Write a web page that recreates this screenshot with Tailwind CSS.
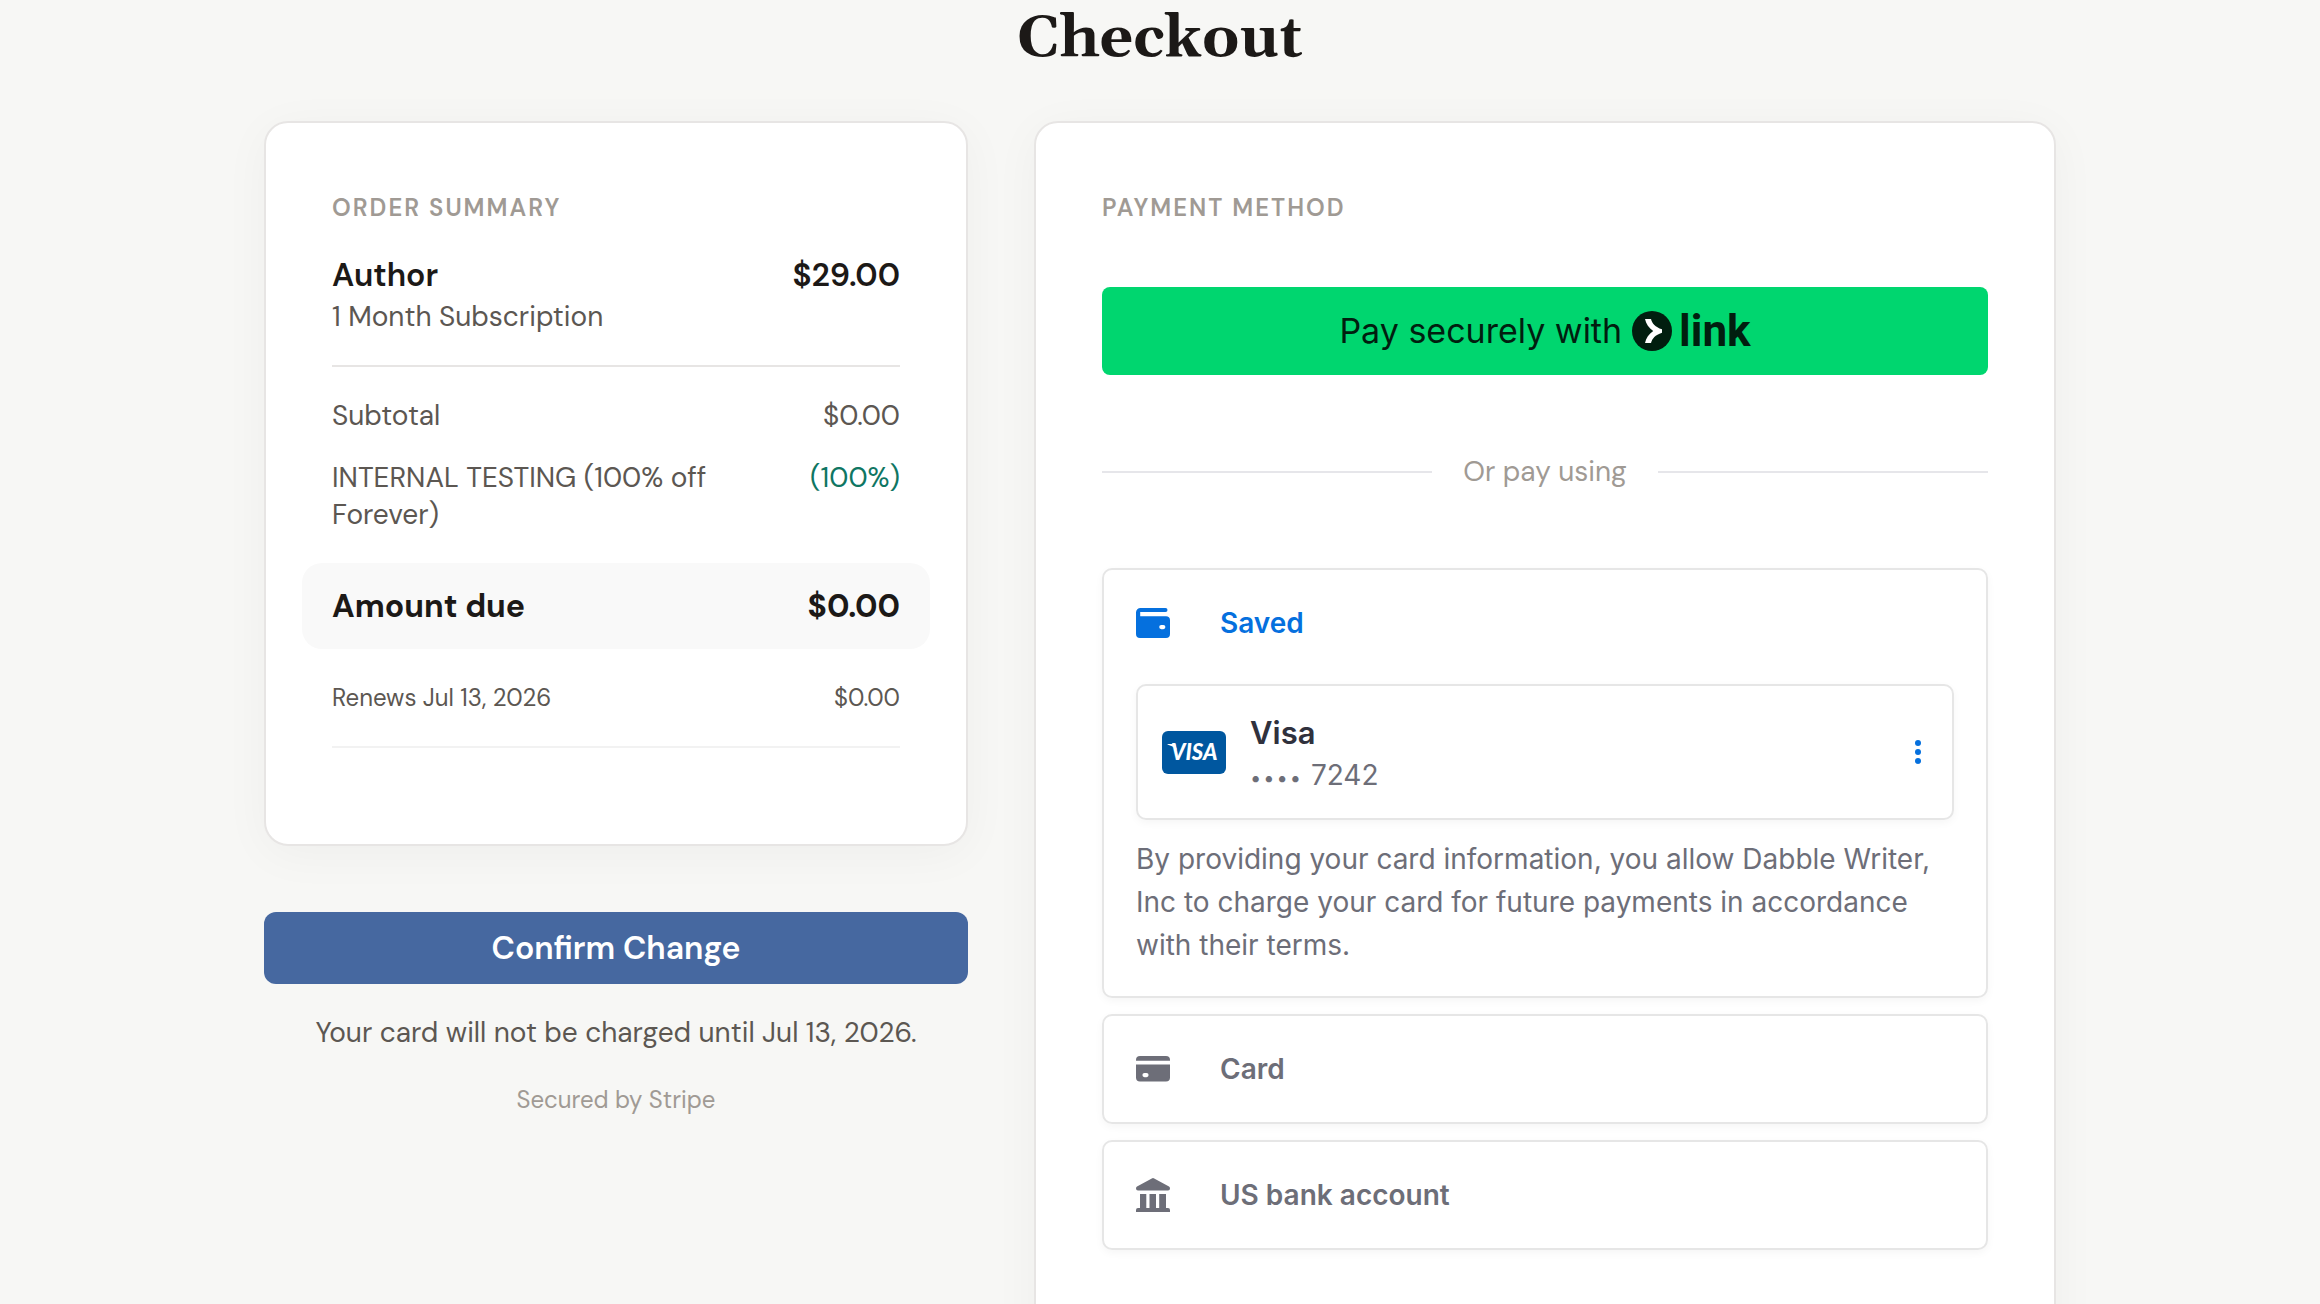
<!DOCTYPE html>
<html lang="en">
<head>
    <meta charset="UTF-8">
    <meta name="viewport" content="width=device-width, initial-scale=1.0">
    <title>Checkout</title>
    <script src="https://cdn.jsdelivr.net/npm/@tailwindcss/browser@4"></script>
</head>

<body class="bg-[#f7f7f5] min-h-screen text-stone-900 font-['DM_Sans',Lato,sans-serif]">
    <main class="max-w-[1792px] mx-auto pb-16">
        <h1 class="pb-11 text-center text-[59px] leading-[77px] font-bold font-['Gelasio','Liberation_Serif',serif]">Checkout</h1>

        <div class="grid grid-cols-[704fr_1022fr] gap-[66px] items-start">
            <!-- Order summary -->
            <div>
                <section class="bg-white border-2 border-stone-200 rounded-[24px] px-[66px] pt-[66px] pb-24 shadow-[0_8px_48px_rgba(0,0,0,0.04)]">
                    <h2 class="text-[24px] leading-[38px] font-semibold tracking-[2px] text-[#a09a94]">ORDER SUMMARY</h2>

                    <div class="flex justify-between pt-[27px] pb-7 border-b-2 border-stone-200">
                        <div>
                            <p class="text-[32px] leading-[43px] font-semibold">Author</p>
                            <p class="text-[28px] leading-[40px] text-[#5c5752]">1 Month Subscription</p>
                        </div>
                        <p class="text-[32px] leading-[43px] font-semibold">$29.00</p>
                    </div>

                    <div class="flex justify-between pt-[30px] text-[28px] leading-[37px] text-[#5c5752]">
                        <p>Subtotal</p>
                        <p>$0.00</p>
                    </div>
                    <div class="flex justify-between gap-24 pt-[25px] text-[28px] leading-[37px] text-[#5c5752]">
                        <p>INTERNAL TESTING (100% off Forever)</p>
                        <p class="text-[#0f7663]">(100%)</p>
                    </div>

                    <div class="flex justify-between mt-[30px] -mx-[30px] px-[30px] py-[22px] rounded-[20px] bg-[#f9f9f9] text-[32px] leading-[42px] font-bold">
                        <p>Amount due</p>
                        <p>$0.00</p>
                    </div>

                    <div class="flex justify-between pt-[33px] pb-8 border-b-2 border-[#f2f2f2] text-[24px] leading-8 text-[#5c5752]">
                        <p>Renews Jul 13, 2026</p>
                        <p>$0.00</p>
                    </div>
                </section>

                <button type="button" class="mt-[66px] w-full h-[72px] rounded-[12px] bg-[#4668a0] text-white text-[32px] leading-[42px] font-semibold">Confirm Change</button>
                <p class="pt-[30px] text-center text-[28px] leading-[37px] text-[#5c5752]">Your card will not be charged until Jul 13, 2026.</p>
                <p class="pt-[33px] text-center text-[24px] leading-8 text-[#a09a94]">Secured by Stripe</p>
            </div>

            <!-- Payment method -->
            <section class="bg-white border-2 border-stone-200 rounded-[24px] px-[66px] pt-[66px] pb-28 shadow-[0_8px_48px_rgba(0,0,0,0.04)]">
                <h2 class="text-[24px] leading-[38px] font-semibold tracking-[2px] text-[#a09a94]">PAYMENT METHOD</h2>

                <button type="button" class="mt-[60px] w-full h-[88px] rounded-[8px] bg-[#00d66f] text-[#011e0f] flex items-center justify-center gap-[10px]">
                    <span class="text-[34px] leading-none font-['Inter',sans-serif]">Pay securely with</span>
                    <span class="flex items-center gap-[7px]">
                        <svg class="w-10 h-10" viewBox="0 0 40 40" aria-hidden="true">
                            <circle cx="20" cy="20" r="20" fill="#011e0f"/>
                            <path d="M13 8h6c1.300 4.500 4 8 11 10.300v3.400C23 24 20.300 27.500 19 32h-6c1-5 3.900-9 8.200-12C16.900 17 14 13 13 8z" fill="#fff"/>
                        </svg>
                        <span class="text-[44px] leading-none font-bold font-['Roboto',sans-serif]">link</span>
                    </span>
                </button>

                <div class="flex items-center gap-[31px] py-[78px]">
                    <span class="flex-1 h-[2px] bg-[#e6e6ea]"></span>
                    <span class="text-[28px] leading-[37px] text-[#a09a94]">Or pay using</span>
                    <span class="flex-1 h-[2px] bg-[#e6e6ea]"></span>
                </div>

                <div class="flex flex-col gap-4 text-[28px] text-[#6d6e78] font-['Inter',sans-serif]">
                    <!-- Saved -->
                    <div class="border-2 border-[#e6e6e6] rounded-[10px] px-8 pb-[29px] shadow-[0_3px_8px_rgba(0,0,0,0.04)]">
                        <button type="button" class="w-full h-[106px] flex items-center gap-[50px] font-semibold text-[#0570de]">
                            <svg class="w-[34px] h-[34px]" viewBox="0 0 34 34" fill="currentColor" aria-hidden="true">
                                <path fill-rule="evenodd" d="M4.500 2H29.500A2 2 0 0 1 31.500 4A2 2 0 0 1 29.500 6.100H4.200V10.300H30A4 4 0 0 1 34 14V28A4 4 0 0 1 30 32H4A4 4 0 0 1 0 28V6.500A4.500 4.500 0 0 1 4.500 2ZM25.300 19A2.100 2.100 0 0 0 25.300 23.200H27.300A2.100 2.100 0 0 0 27.300 19Z"/>
                            </svg>
                            Saved
                        </button>

                        <div class="mt-2 h-[136px] flex items-center border-2 border-[#e6e6e6] rounded-[10px] pl-6 pr-[14px] shadow-[0_3px_8px_rgba(0,0,0,0.04)]">
                            <svg class="w-16 h-[43px]" viewBox="0 0 64 43" role="img" aria-label="Visa">
                                <rect width="64" height="43" rx="6" fill="#00579f"/>
                                <path d="M5.500 13H13L15 19Q11 15 5.500 13.600Z" fill="#fff"/>
                                <text x="9" y="29" fill="#fff" class="text-[22px] font-black italic font-['Lato',sans-serif]">VISA</text>
                            </svg>
                            <div class="flex-1 pl-6">
                                <p class="text-[31px] leading-[48px] font-semibold text-[#30313d]">Visa</p>
                                <p class="leading-[36px]"><span class="text-[20px] tracking-[2px]">••••</span> 7242</p>
                            </div>
                            <button type="button" aria-label="More options" class="w-10 h-10 flex items-center justify-center text-[#0570de]">
                                <svg class="w-6 h-6" viewBox="0 0 24 24" fill="currentColor">
                                    <circle cx="12" cy="3" r="3"/>
                                    <circle cx="12" cy="12" r="3"/>
                                    <circle cx="12" cy="21" r="3"/>
                                </svg>
                            </button>
                        </div>

                        <p class="pt-[18px] leading-[43px]">By providing your card information, you allow Dabble Writer, Inc to charge your card for future payments in accordance with their terms.</p>
                    </div>

                    <!-- Card -->
                    <button type="button" class="h-[110px] flex items-center gap-[50px] px-8 font-semibold border-2 border-[#e6e6e6] rounded-[10px] shadow-[0_3px_8px_rgba(0,0,0,0.04)]">
                        <svg class="w-[34px] h-[34px]" viewBox="0 0 34 34" fill="currentColor" aria-hidden="true">
                            <path d="M4 4H30A4 4 0 0 1 34 8V8.800H0V8A4 4 0 0 1 4 4Z"/>
                            <path fill-rule="evenodd" d="M0 12.400H34V25.500A4 4 0 0 1 30 29.500H4A4 4 0 0 1 0 25.500ZM8.500 21A2.100 2.100 0 0 0 8.500 25.200H10.500A2.100 2.100 0 0 0 10.500 21Z"/>
                        </svg>
                        Card
                    </button>

                    <!-- US bank account -->
                    <button type="button" class="h-[110px] flex items-center gap-[50px] px-8 font-semibold border-2 border-[#e6e6e6] rounded-[10px] shadow-[0_3px_8px_rgba(0,0,0,0.04)]">
                        <svg class="w-[34px] h-[34px]" viewBox="0 0 34 34" fill="currentColor" aria-hidden="true">
                            <path d="M15.800 .4Q17 -.3 18.200 .4L33 8.600Q34 9.300 34 10.500Q34 12.600 32 12.600H2Q0 12.600 0 10.500Q0 9.300 1 8.600Z"/>
                            <path d="M4 16H10.300V30H13.500V16H20V30H23.200V16H30V30H32A2 2 0 0 1 34 32V34H0V32A2 2 0 0 1 2 30H4Z"/>
                        </svg>
                        US bank account
                    </button>
                </div>
            </section>
        </div>
    </main>
</body>
</html>
